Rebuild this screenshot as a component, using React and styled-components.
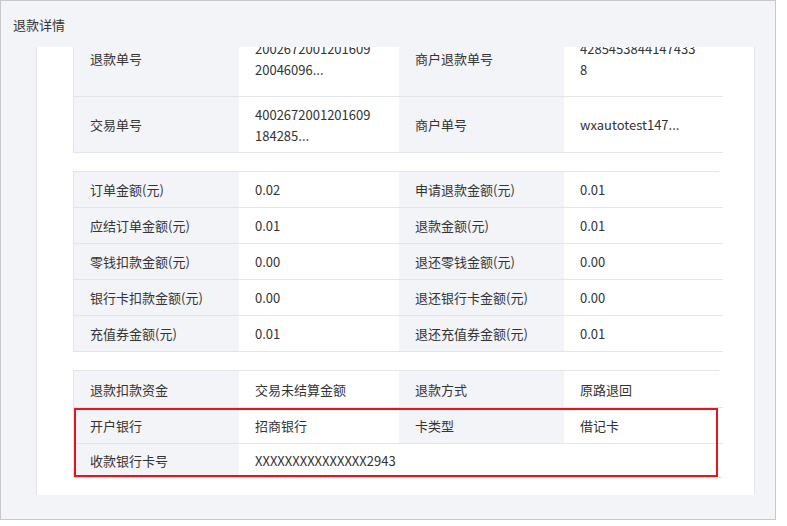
import React from "react";
import styled, { createGlobalStyle } from "styled-components";

const G = createGlobalStyle`
  body { margin:0; background:#fff; font-family:"Noto Sans CJK SC","Liberation Sans",sans-serif; }
`;
const Frame = styled.div`
  width:776px; height:520px; border:1px solid #c8c8cc; border-top:none; box-sizing:border-box;
  background:#f3f4f8; display:flex; flex-direction:column; position:relative; overflow:hidden;
`;
const Header = styled.div`
  height:46px; flex:none; display:flex; align-items:center; padding-left:12px;
  font-size:13px; color:#333; background:#f3f4f8; border-top:1px solid #c8c8cc; z-index:1;
`;
const Panel = styled.div`
  margin:0 20px 0 35px; height:448px; flex:none; background:#fff;
  border-left:1px solid #e4e5ea; border-right:1px solid #e4e5ea; overflow:hidden;
  padding:0 35px 0 36px; display:flex; flex-direction:column; gap:18px;
`;
const Table = styled.div`
  display:grid; grid-template-columns:165px 160px 165px 159px;
  border:1px solid #e4e5ea; border-bottom:none; position:relative;
  margin-top:${p => p.$mt || 0}px;
`;
const Cell = styled.div`
  background:${p => p.$label ? "#f3f4f8" : "#fff"}; border-bottom:1px solid #e4e5ea;
  padding:${p => p.$tall ? "8px 16px" : "0 16px"}; height:${p => p.$h}px; box-sizing:border-box;
  display:flex; align-items:center; font-size:13px; line-height:21px; color:#333;
  grid-column:${p => p.$span || "auto"}; word-break:break-all; overflow:hidden;
`;
const Wrap = styled.span` display:block; max-width:122px; `;
const Red = styled.div`
  position:absolute; left:0; right:0; top:${p => p.$top}px; height:69px;
  border:2px solid #e8141b; box-sizing:border-box; pointer-events:none;
`;
const Footer = styled.div` flex:1; background:#f3f4f8; `;

const r = (cells, h, tall) => cells.map((c, i) => (
  <Cell key={i} $label={i % 2 === 0} $h={h} $tall={tall} $span={c.span}>
    {tall && i % 2 === 1 ? <Wrap>{c}</Wrap> : (c.t ?? c)}
  </Cell>
));

export default function App() {
  return (
    <Frame>
      <G />
      <Header>退款详情</Header>
      <Panel>
        <Table $mt={-27}>
          {r(["退款单号", "200267200120160920046096...", "商户退款单号", "42854538441474338"], 76, true)}
          {r(["交易单号", "4002672001201609184285...", "商户单号", "wxautotest147..."], 56, true)}
        </Table>
        <Table>
          {r(["订单金额(元)", "0.02", "申请退款金额(元)", "0.01"], 36)}
          {r(["应结订单金额(元)", "0.01", "退款金额(元)", "0.01"], 36)}
          {r(["零钱扣款金额(元)", "0.00", "退还零钱金额(元)", "0.00"], 36)}
          {r(["银行卡扣款金额(元)", "0.00", "退还银行卡金额(元)", "0.00"], 36)}
          {r(["充值券金额(元)", "0.01", "退还充值券金额(元)", "0.01"], 36)}
        </Table>
        <Table>
          {r(["退款扣款资金", "交易未结算金额", "退款方式", "原路退回"], 37)}
          {r(["开户银行", "招商银行", "卡类型", "借记卡"], 36)}
          {r(["收款银行卡号", { t: "XXXXXXXXXXXXXXX2943", span: "span 3" }], 34)}
          <Red $top={37} />
        </Table>
      </Panel>
      <Footer />
    </Frame>
  );
}
